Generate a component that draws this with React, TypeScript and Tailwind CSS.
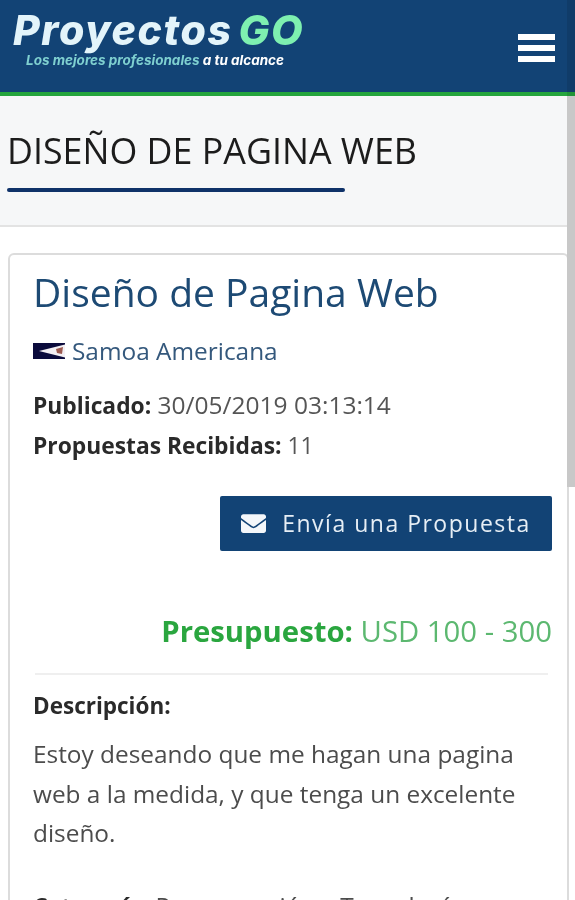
import { FaEnvelope } from 'react-icons/fa';

const openSans = { fontFamily: '"Open Sans", sans-serif' };

function Logo() {
  return (
    <div className="flex flex-col pt-[8px] pl-[13px]">
      <div className="flex items-baseline font-['Inter',sans-serif] text-[41px] leading-[44px] font-extrabold tracking-[1.6px] italic">
        <span className="text-[#e3f4fa]">Proyectos</span>
        <span className="ml-[6px] text-[#7ef0b0]">GO</span>
      </div>
      <div className="mt-[1px] ml-[13px] font-['Inter',sans-serif] text-[13.5px] leading-[14px] font-bold italic">
        <span className="text-[#7fd0d0]">Los mejores profesionales </span>
        <span className="text-white">a tu alcance</span>
      </div>
    </div>
  );
}

function Flag() {
  return (
    <svg width="32" height="16" viewBox="0 0 32 16" className="shrink-0">
      <rect width="32" height="16" fill="#0b0b3c" />
      <path d="M32 1.5 L6 8 L32 14.5 Z" fill="#f4f0f4" />
      <path d="M23 6 L30 4 L29 11 L24 10 Z" fill="#9c5a50" />
    </svg>
  );
}

export default function App() {
  return (
    <div className="relative h-[900px] overflow-hidden bg-white text-[#444] blur-[0.5px]" style={openSans}>
      {/* Header */}
      <header className="flex h-[96px] items-start justify-between border-b-[4px] border-[#25a53d] bg-[#124375]">
        <Logo />
        <div className="mt-[34px] mr-[20px] flex w-[37px] flex-col gap-[5px]">
          <span className="h-[6px] bg-white" />
          <span className="h-[6px] bg-white" />
          <span className="h-[6px] bg-white" />
        </div>
      </header>

      {/* Title band */}
      <section className="h-[131px] border-b-2 border-[#e3e3e3] bg-[#f6f7f8] pt-[30px]">
        <h1 className="pl-[7px] text-[35.8px] leading-[48px] text-[#1c1c1c]">DISEÑO DE PAGINA WEB</h1>
        <div className="mt-[14px] ml-[7px] h-[4px] w-[338px] rounded-sm bg-[#0f3269]" />
      </section>

      {/* Card */}
      <main className="mt-[26px] ml-[8px] h-[700px] w-[561px] rounded-[6px] border-2 border-[#dcdcdc] pt-[12px] pl-[23px]">
        <h2 className="text-[39px] leading-[50px] text-[#1d4a74]">Diseño de Pagina Web</h2>
        <div className="mt-[18px] flex items-center gap-[7px]">
          <Flag />
          <span className="text-[24.4px] leading-[32px] text-[#34587c]">Samoa Americana</span>
        </div>
        <p className="mt-[19px] text-[24.5px] leading-[38px] text-[#555]">
          <b className="text-[22.8px] text-[#2a2a2a]">Publicado:</b> 30/05/2019 03:13:14
        </p>
        <p className="mt-[2px] text-[22.8px] leading-[38px] text-[#555]">
          <b className="text-[#2a2a2a]">Propuestas Recibidas:</b> 11
        </p>
        <div className="mt-[31px] w-[519px]">
          <div className="ml-auto flex h-[55px] w-[332px] items-center justify-center gap-[16px] rounded-[2px] bg-[#124375] text-[23px] tracking-[1.5px] text-[#e6eef5]">
            <FaEnvelope size={25} color="#f4f7fa" />
            Envía una Propuesta
          </div>
          <p className="mt-[58px] text-right text-[29.3px] leading-[44px] text-[#5cb870]">
            <b className="text-[#2aa63f]">Presupuesto:</b> USD 100 - 300
          </p>
          <hr className="mt-[20px] mr-[4px] ml-[2px] border-t-2 border-[#efefef]" />
        </div>
        <h3 className="mt-[15px] text-[22.5px] leading-[32px] font-bold text-[#2a2a2a]">Descripción:</h3>
        <p className="mt-[12px] w-[519px] text-[24.4px] leading-[39.5px] text-[#4c4c4c]">
          Estoy deseando que me hagan una pagina web a la medida, y que tenga un excelente diseño.
        </p>
        <p className="mt-[33px] text-[24.4px] leading-[40px] text-[#4c4c4c]">
          <b className="text-[22.8px] text-[#2a2a2a]">Categoría:</b> Programación y Tecnología
        </p>
      </main>

      {/* Scrollbar */}
      <div className="absolute top-0 right-0 h-[96px] w-[8px] bg-black/10" />
      <div className="absolute top-[96px] right-0 h-[391px] w-[8px] bg-[#c8c8c8]" />
    </div>
  );
}
